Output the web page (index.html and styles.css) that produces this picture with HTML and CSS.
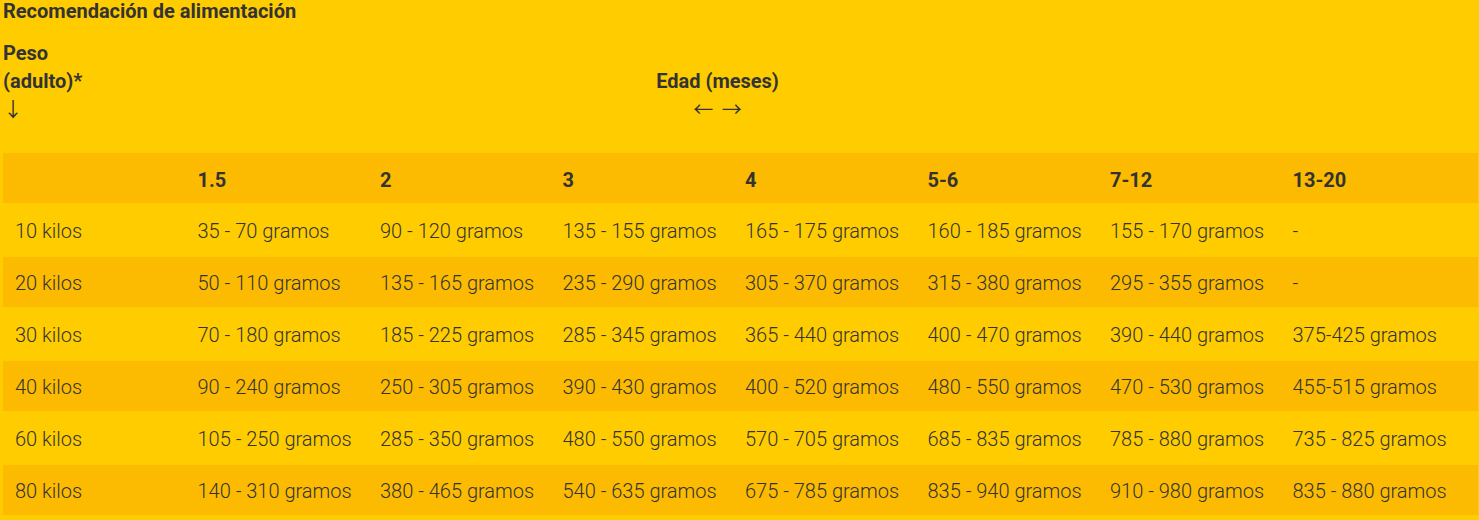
FILE: index.html
```html
<!DOCTYPE html>
<html lang="es">
<head>
<meta charset="utf-8">
<title>Recomendación de alimentación</title>
<link rel="stylesheet" href="styles.css">
</head>
<body>
<div class="page">
  <h3 class="title">Recomendación de alimentación</h3>
  <div class="axes">
    <div class="axis-weight">Peso (adulto)*<br><span class="arrow">↓</span></div>
    <div class="axis-age">Edad (meses)<br><span class="arrow">← →</span></div>
  </div>
  <table class="feed">
    <thead>
      <tr><th></th><th>1.5</th><th>2</th><th>3</th><th>4</th><th>5-6</th><th>7-12</th><th>13-20</th></tr>
    </thead>
    <tbody>
      <tr><td>10 kilos</td><td>35 - 70 gramos</td><td>90 - 120 gramos</td><td>135 - 155 gramos</td><td>165 - 175 gramos</td><td>160 - 185 gramos</td><td>155 - 170 gramos</td><td>-</td></tr>
      <tr><td>20 kilos</td><td>50 - 110 gramos</td><td>135 - 165 gramos</td><td>235 - 290 gramos</td><td>305 - 370 gramos</td><td>315 - 380 gramos</td><td>295 - 355 gramos</td><td>-</td></tr>
      <tr><td>30 kilos</td><td>70 - 180 gramos</td><td>185 - 225 gramos</td><td>285 - 345 gramos</td><td>365 - 440 gramos</td><td>400 - 470 gramos</td><td>390 - 440 gramos</td><td>375-425 gramos</td></tr>
      <tr><td>40 kilos</td><td>90 - 240 gramos</td><td>250 - 305 gramos</td><td>390 - 430 gramos</td><td>400 - 520 gramos</td><td>480 - 550 gramos</td><td>470 - 530 gramos</td><td>455-515 gramos</td></tr>
      <tr><td>60 kilos</td><td>105 - 250 gramos</td><td>285 - 350 gramos</td><td>480 - 550 gramos</td><td>570 - 705 gramos</td><td>685 - 835 gramos</td><td>785 - 880 gramos</td><td>735 - 825 gramos</td></tr>
      <tr><td>80 kilos</td><td>140 - 310 gramos</td><td>380 - 465 gramos</td><td>540 - 635 gramos</td><td>675 - 785 gramos</td><td>835 - 940 gramos</td><td>910 - 980 gramos</td><td>835 - 880 gramos</td></tr>
    </tbody>
  </table>
</div>
</body>
</html>
```

FILE: styles.css
```css
html, body {
  margin: 0;
  padding: 0;
  background: #ffcc00;
  overflow: hidden;
}
.page {
  font-family: Roboto, "Liberation Sans", sans-serif;
  color: #333333;
  padding: 0 0 0 3px;
}
.title {
  margin: 0;
  font-size: 20px;
  font-weight: 700;
  line-height: 22px;
}
.axes {
  display: flex;
  align-items: flex-end;
  margin-top: 17px;
  font-size: 20px;
  font-weight: 700;
  line-height: 28px;
}
.axis-weight {
  flex: none;
  width: 90px;
}
.axis-age {
  flex: 1;
  text-align: center;
  padding-right: 137px;
}
.arrow {
  font-family: "Noto Sans CJK SC", sans-serif;
  font-weight: 400;
  line-height: 28px;
  word-spacing: 4px;
}
.feed {
  margin: 27px 0 0 0;
  width: 1475px;
  border-collapse: separate;
  border-spacing: 0 2px;
  font-size: 20px;
  color: #333333;
}
.feed th,
.feed td {
  height: 50px;
  padding: 2px 12px 0;
  box-sizing: border-box;
  text-align: left;
  vertical-align: middle;
  white-space: nowrap;
  width: 182.5px;
}
.feed th {
  padding-top: 4px;
}
.feed th:last-child,
.feed td:last-child {
  width: auto;
}
.feed th {
  font-weight: 700;
  background: #fcbb00;
}
.feed td {
  font-weight: 300;
}
.feed tbody tr:nth-child(even) td {
  background: #fcbb00;
}
```
